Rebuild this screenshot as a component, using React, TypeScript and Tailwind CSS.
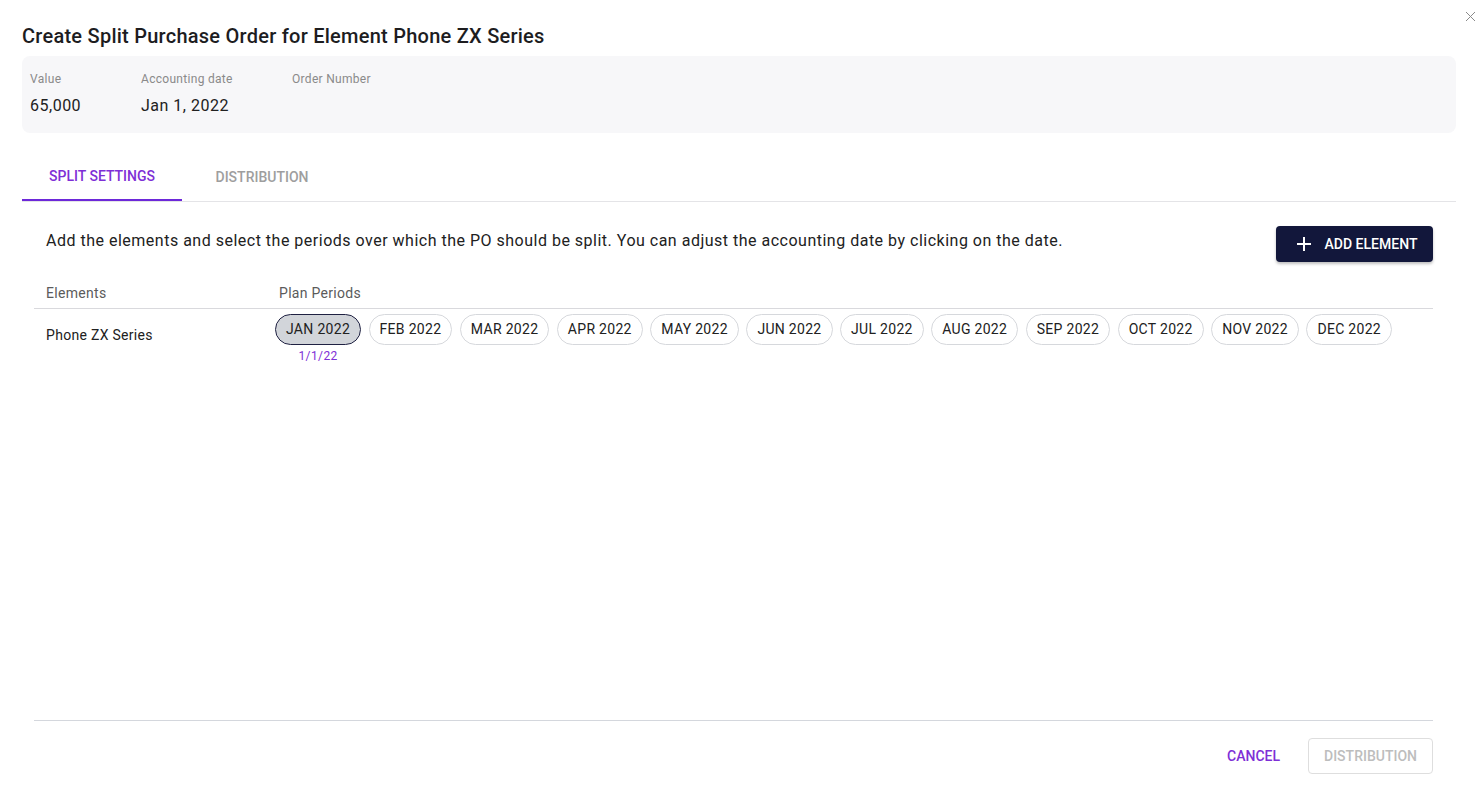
import React from "react";

const months = ["JAN", "FEB", "MAR", "APR", "MAY", "JUN", "JUL", "AUG", "SEP", "OCT", "NOV", "DEC"];

export default function App() {
  return (
    <div
      className="relative flex h-[794px] w-full flex-col bg-white pl-[22px] pr-[21px] pt-[22px] text-[#212121]"
      style={{ fontFamily: "Roboto, 'Noto Sans', sans-serif" }}
    >
      <button className="absolute right-[1px] top-[11px] text-[#8a8a8a]" aria-label="close">
        <svg width="11" height="11" viewBox="0 0 11 11" fill="none" stroke="currentColor" strokeWidth="1">
          <path d="M1 1 L10 10 M10 1 L1 10" />
        </svg>
      </button>

      <h1 className="h-[28px] text-[20px] font-medium leading-[28px] tracking-[0.25px] text-[#1d1d1f]">
        Create Split Purchase Order for Element Phone ZX Series
      </h1>

      <div className="mt-[6px] flex h-[77px] rounded-[8px] bg-[#f7f7f9] px-[8px] pt-[15px]">
        <div className="w-[111px]">
          <div className="text-[12px] leading-[16px] tracking-[0.3px] text-[#8a8a8a]">Value</div>
          <div className="mt-[7px] text-[16px] leading-[24px] tracking-[0.5px] text-[#212121]">65,000</div>
        </div>
        <div className="w-[151px]">
          <div className="text-[12px] leading-[16px] tracking-[0.3px] text-[#8a8a8a]">Accounting date</div>
          <div className="mt-[7px] text-[16px] leading-[24px] tracking-[0.5px] text-[#212121]">Jan 1, 2022</div>
        </div>
        <div>
          <div className="text-[12px] leading-[16px] tracking-[0.3px] text-[#8a8a8a]">Order Number</div>
        </div>
      </div>

      <div className="mt-[20px] flex border-b border-[#e4e4e7]">
        <div className="flex h-[48px] w-[160px] items-center justify-center border-b-2 border-[#6d28d9] text-[14px] font-medium text-[#7e2fd6]">
          SPLIT SETTINGS
        </div>
        <div className="flex h-[48px] w-[160px] items-center justify-center text-[14px] font-medium text-[#9e9e9e]">
          DISTRIBUTION
        </div>
      </div>

      <div className="flex flex-1 flex-col pl-[12px] pr-[23px]">
        <div className="mt-[24px] flex items-start justify-between">
          <p className="mt-[3px] pl-[12px] text-[16px] leading-[24px] tracking-[0.5px] text-[#212121]">
            Add the elements and select the periods over which the PO should be split. You can adjust the accounting date by clicking on the date.
          </p>
          <button className="flex h-[36px] w-[157px] items-center justify-center gap-[13px] rounded-[4px] bg-[#12173b] pl-[4px] text-[14px] font-medium text-white shadow-[0_2px_3px_rgba(0,0,0,0.25)]">
            <svg width="16" height="16" viewBox="0 0 16 16" stroke="currentColor" strokeWidth="2" fill="none">
              <path d="M8 1 V15 M1 8 H15" />
            </svg>
            ADD ELEMENT
          </button>
        </div>

        <div className="mt-[21px] flex border-b border-[#d9d9dd] pb-[5px] pl-[12px] text-[14px] leading-[20px] tracking-[0.3px] text-[#5b5b5b]">
          <div className="w-[233px]">Elements</div>
          <div>Plan Periods</div>
        </div>

        <div className="flex pl-[12px] pt-[5px]">
          <div className="w-[229px] pt-[11px] text-[14px] leading-[20px] tracking-[0.3px] text-[#212121]">Phone ZX Series</div>
          <div className="flex gap-[7.5px]">
            {months.map((m, i) => (
              <div key={m} className="flex flex-col items-center">
                <div
                  className={
                    i === 0
                      ? "flex h-[31px] items-center rounded-full border border-[#1f2142] bg-[#d2d5da] px-[10px] text-[14px] tracking-[0.3px] text-[#212121]"
                      : "flex h-[31px] items-center rounded-full border border-[#d6d8dc] bg-white px-[10px] text-[14px] tracking-[0.3px] text-[#212121]"
                  }
                >
                  {m} 2022
                </div>
                {i === 0 && (
                  <div className="mt-[4px] text-[12px] leading-[14px] tracking-[0.4px] text-[#7e2fd6]">1/1/22</div>
                )}
              </div>
            ))}
          </div>
        </div>

        <div className="flex-1" />

        <div className="flex items-center justify-end gap-[28px] border-t border-[#d4d7dd] pb-[20px] pt-[17px]">
          <button className="text-[14px] font-medium text-[#7e2fd6]">CANCEL</button>
          <button className="flex h-[36px] w-[125px] items-center justify-center rounded-[4px] border border-[#dedede] text-[14px] font-medium text-[#bdbdbd]">
            DISTRIBUTION
          </button>
        </div>
      </div>
    </div>
  );
}
